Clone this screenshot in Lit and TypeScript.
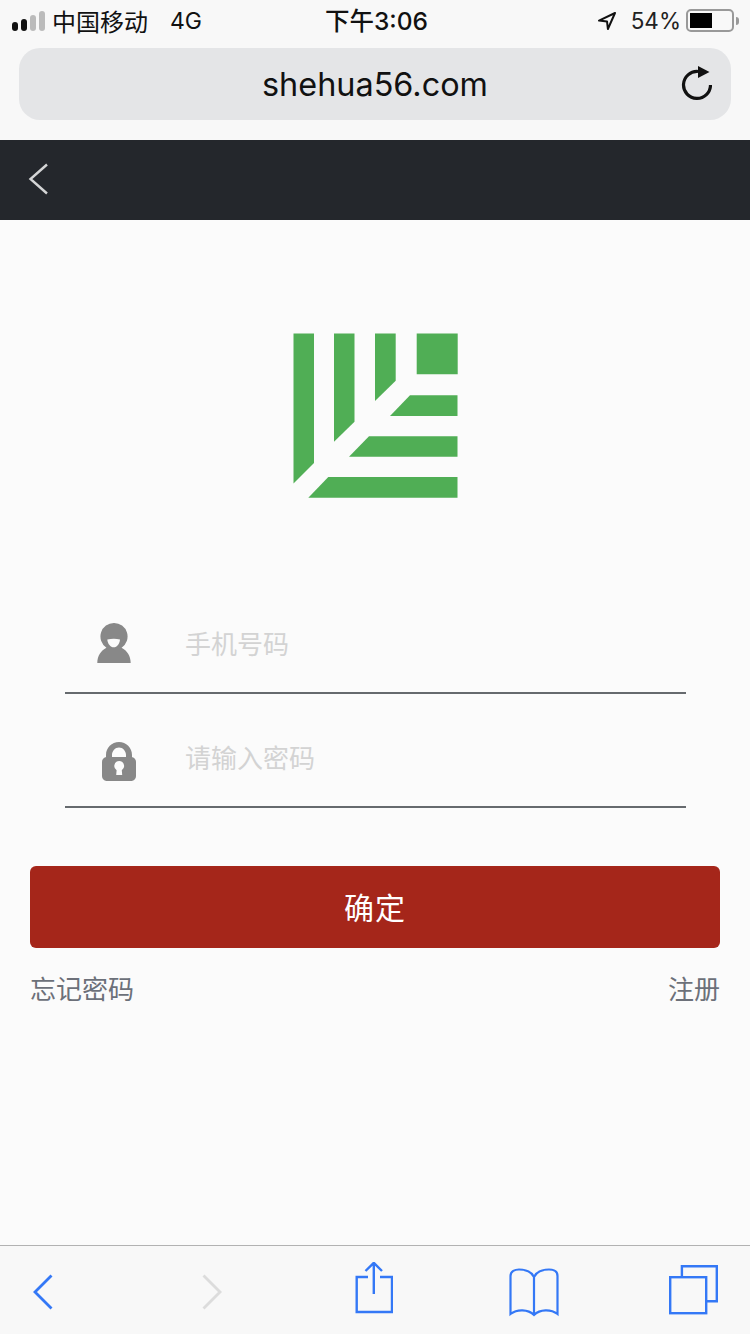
import { css, html, LitElement } from "lit";
import { customElement } from "lit/decorators.js";

@customElement("app-root")
export class AppRoot extends LitElement {
    protected override render() {
        return html`
            <header class="browser">
                <div class="status">
                    <div class="status-left">
                        <span class="signal"><i class="on"></i><i class="on"></i><i></i><i></i></span>
                        <span class="carrier">中国移动</span>
                        <span class="network">4G</span>
                    </div>
                    <div class="time">下午3:06</div>
                    <div class="status-right">
                        <svg class="loc" width="20" height="20" viewBox="0 0 20 20">
                            <path d="M18 2 2 9.600l8 .8.9 7.600z" fill="none" stroke="#111" stroke-width="2" stroke-linejoin="round"/>
                        </svg>
                        <span class="pct">54%</span>
                        <span class="battery"><span class="level"></span></span>
                        <span class="nub"></span>
                    </div>
                </div>
                <div class="url">
                    <span class="domain">shehua56.com</span>
                    <svg class="reload" width="32" height="38" viewBox="0 0 32 38">
                        <path d="M18 7.500A13.500 13.500 0 1 0 30.500 21" fill="none" stroke="#111" stroke-width="3.200"/>
                        <path d="M18 2 29.500 8 18 14z" fill="#111"/>
                    </svg>
                </div>
            </header>
            <nav class="topbar">
                <svg width="22" height="32" viewBox="0 0 22 32">
                    <path d="M19 1.500 2.500 16 19 30.500" fill="none" stroke="#d4d5d6" stroke-width="2.400"/>
                </svg>
            </nav>
            <main>
                <svg class="logo" width="166" height="166" viewBox="0 0 166 166" fill="#50ae55">
                    <path d="M.5.500H21V130L.5 150.500z"/>
                    <path d="M41 .5H61.500V88.700L41 108.700z"/>
                    <path d="M82 .5H102.700V47.700L82 68z"/>
                    <path d="M123.700.5H164.700V41.300H123.700z"/>
                    <path d="M117 62.300H164.500V83H97z"/>
                    <path d="M76 103.300H164.500V123.700H56z"/>
                    <path d="M35.300 144H164.500V164.700H15.300z"/>
                </svg>
                <div class="fields">
                    <label class="field">
                        <svg class="icon user" width="34" height="40" viewBox="0 0 34 40" fill="#888">
                            <path d="M17 0a13.500 13.500 0 0 1 7.600 24.700C30 27.500 33.700 33 33.700 40H.3c0-7 3.700-12.500 9.100-15.300A13.500 13.500 0 0 1 17 0z"/>
                            <path d="M10.300 16.500Q17 14.800 23 16.500C22.600 21 20 24.300 16.700 24.300S10.700 21 10.300 16.500z" fill="#fbfbfb"/>
                        </svg>
                        <span class="placeholder">手机号码</span>
                    </label>
                    <label class="field">
                        <svg class="icon lock" width="34" height="39" viewBox="0 0 34 39" fill="#888">
                            <path fill-rule="evenodd" d="M17 0c7.200 0 13 5.800 13 13v3h-6v-3c0-3.900-3.100-7.500-7-7.500S10 9.100 10 13v3H4v-3C4 5.800 9.800 0 17 0z"/>
                            <path d="M5 15h24c2.800 0 5 2.200 5 5v14c0 2.800-2.200 5-5 5H5c-2.800 0-5-2.200-5-5V20c0-2.800 2.200-5 5-5z"/>
                            <path d="M17.200 19a5 5 0 0 1 2.600 9.200l.4 4.800h-6l.4-4.800A5 5 0 0 1 17.200 19z" fill="#fbfbfb"/>
                        </svg>
                        <span class="placeholder">请输入密码</span>
                    </label>
                </div>
                <button class="submit">确定</button>
                <div class="links">
                    <span>忘记密码</span>
                    <span>注册</span>
                </div>
            </main>
            <footer class="toolbar">
                <svg class="t-back" width="22" height="36" viewBox="0 0 22 36">
                    <path d="M19.500 1.500 3 18l16.500 16.500" fill="none" stroke="#3478f6" stroke-width="2.800"/>
                </svg>
                <svg class="t-forward" width="22" height="36" viewBox="0 0 22 36">
                    <path d="M2.500 1.500 19 18 2.500 34.500" fill="none" stroke="#dcdcdc" stroke-width="2.800"/>
                </svg>
                <svg class="t-share" width="38" height="52" viewBox="0 0 38 52" fill="none" stroke="#3478f6" stroke-width="2.400">
                    <path d="M13 15H1.700V50H37V15H25"/>
                    <path d="M18.800 32V1M10.500 9 18.800.8 27 9"/>
                </svg>
                <svg class="t-book" width="50" height="50" viewBox="0 0 50 50" fill="none" stroke="#3478f6" stroke-width="2.200">
                    <path d="M25 10C22 4 16 2.500 10 2.500 6 2.500 1.500 4 1.500 9V47C8 42 19 42 25 48 31 42 42 42 48.500 47V9C48.500 4 44 2.500 40 2.500 34 2.500 28 4 25 10V48"/>
                </svg>
                <svg class="t-tabs" width="50" height="50" viewBox="0 0 50 50" fill="none" stroke="#3478f6" stroke-width="2.400">
                    <rect x="1.200" y="12.200" width="36" height="36"/>
                    <path d="M12.900 11V1.200H47.800V36.200H38"/>
                </svg>
            </footer>
        `;
    }

    static styles = css`
        :host {
            display: flex;
            flex-direction: column;
            width: 750px;
            min-height: 1334px;
            background: #fbfbfb;
            font-family: "Noto Sans CJK SC", sans-serif;
            color: #111;
        }

        svg {
            display: block;
            flex: none;
        }

        .browser {
            height: 140px;
            background: #f8f8f8;
            box-sizing: border-box;
        }

        .status {
            height: 48px;
            padding: 0 11px 7px 12px;
            box-sizing: border-box;
            display: grid;
            grid-template-columns: 1fr auto 1fr;
            align-items: center;
        }

        .status-left {
            display: flex;
            align-items: center;
        }

        .signal {
            display: flex;
            align-items: flex-end;
            gap: 3px;
            margin-right: 7px;
        }

        .signal i {
            width: 6px;
            border-radius: 3px;
            background: #bbb;
            height: 20px;
        }

        .signal i:nth-child(1) { height: 9px; }
        .signal i:nth-child(2) { height: 12px; }
        .signal i:nth-child(3) { height: 16px; }
        .signal i.on { background: #111; }

        .carrier {
            font-size: 24px;
            width: 118px;
        }

        .network {
            font-family: Inter, sans-serif;
            font-size: 23px;
            margin-top: 1px;
        }

        .time {
            font-family: Inter, "Noto Sans CJK SC", sans-serif;
            font-size: 24.500px;
            font-weight: 500;
            margin: 0 0 3px 2px;
        }

        .status-right {
            display: flex;
            align-items: center;
            justify-content: flex-end;
        }

        .loc {
            margin-right: 14px;
        }

        .pct {
            font-family: Inter, sans-serif;
            font-size: 22.500px;
            margin-right: 5px;
            color: #222;
        }

        .battery {
            width: 48px;
            height: 23px;
            box-sizing: border-box;
            border: 2px solid #999;
            border-radius: 5px;
            padding: 2px;
            display: flex;
        }

        .level {
            width: 22px;
            background: #000;
        }

        .nub {
            width: 3px;
            height: 8px;
            margin-left: 2px;
            background: #999;
            border-radius: 0 3px 3px 0;
        }

        .url {
            position: relative;
            height: 72px;
            margin: 0 19px;
            background: #e4e5e7;
            border-radius: 21px;
            display: flex;
            align-items: center;
            justify-content: center;
        }

        .domain {
            font-family: Inter, sans-serif;
            font-size: 32.400px;
            color: #111;
        }

        .reload {
            position: absolute;
            right: 19px;
            top: 16px;
        }

        .topbar {
            height: 80px;
            background: #24272c;
            padding: 0 0 0 28px;
            display: flex;
            align-items: center;
            box-sizing: border-box;
        }

        .topbar svg {
            margin-top: -2px;
        }

        main {
            flex: 1;
            display: flex;
            flex-direction: column;
            padding: 0 30px;
        }

        .logo {
            margin: 113px auto 0 263px;
        }

        .fields {
            margin: 81px 34px 0 35px;
        }

        .field {
            height: 114px;
            box-sizing: border-box;
            border-bottom: 2px solid #666a6e;
            display: flex;
            align-items: flex-end;
            padding: 0 0 24px 32px;
        }

        .user {
            margin: 0 54px 5px 0;
        }

        .lock {
            margin: 0 49px 1px 5px;
        }

        .placeholder {
            font-size: 26px;
            line-height: 36px;
            color: #d3d3d3;
            margin-bottom: 7px;
        }

        .submit {
            margin-top: 58px;
            height: 82px;
            width: 690px;
            border: none;
            border-radius: 6px;
            background: #a5261a;
            color: #fff;
            font-family: inherit;
            font-size: 30px;
            letter-spacing: 1px;
            padding: 0 0 2px;
        }

        .links {
            display: flex;
            justify-content: space-between;
            margin-top: 21px;
            font-size: 26px;
            line-height: 38px;
            color: #6c7079;
        }

        .toolbar {
            height: 89px;
            box-sizing: border-box;
            background: #f8f8f8;
            border-top: 1px solid #b2b2b2;
            display: flex;
            align-items: flex-start;
        }

        .t-back { margin: 28px 0 0 32px; }
        .t-forward { margin: 28px 0 0 147px; }
        .t-share { margin: 16px 0 0 132px; }
        .t-book { margin: 21px 0 0 116px; }
        .t-tabs { margin: 19px 0 0 110px; }
    `;
}

declare global {
    interface HTMLElementTagNameMap {
        "app-root": AppRoot;
    }
}
